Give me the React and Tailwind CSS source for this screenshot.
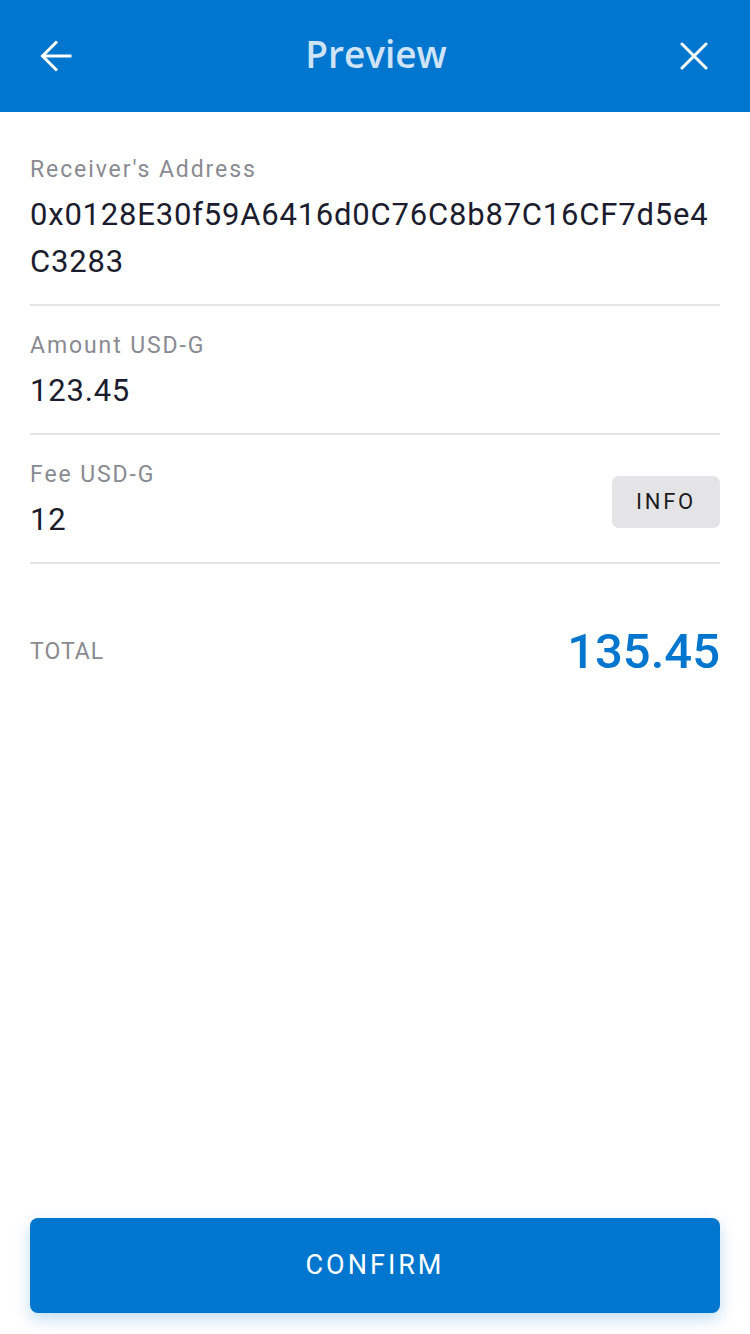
function Field({ label, children, action }) {
  return (
    <div className="flex items-center justify-between border-b-2 border-[#e4e4e6] pt-[25px] pb-[19px]">
      <div className="min-w-0 max-w-[686px]">
        <p className="text-[23px] leading-[30px] tracking-[1.9px] text-[#8a8a91]">{label}</p>
        <div className="mt-[6px] text-[31px] leading-[47px] tracking-[0.8px] text-[#1b1d2e] break-all">{children}</div>
      </div>
      {action}
    </div>
  );
}

export default function App() {
  return (
    <div className="min-h-[1334px] bg-white flex flex-col font-['Roboto',sans-serif]">
      <header className="h-[112px] bg-[#0076ce] flex items-center justify-between pl-[40px] pr-[42px]">
        <svg width="32" height="32" viewBox="0 0 32 32" fill="none" stroke="white" strokeWidth="3" strokeLinejoin="miter">
          <path d="M31.5 16H3" />
          <path d="M17 1.5 2.5 16 17 30.5" />
        </svg>
        <h1 className="font-['Open_Sans',sans-serif] font-semibold text-[37px] leading-[50px] -mt-[4px] text-[#cfe4f6]">Preview</h1>
        <svg width="28" height="28" viewBox="0 0 28 28" fill="none" stroke="white" strokeWidth="3" strokeLinecap="round">
          <path d="M2 2 26 26M26 2 2 26" />
        </svg>
      </header>

      <main className="flex-1 flex flex-col px-[30px]">
        <div className="pt-[18px]">
          <Field label="Receiver's Address">0x0128E30f59A6416d0C76C8b87C16CF7d5e4C3283</Field>
          <Field label="Amount USD-G">123.45</Field>
          <Field
            label="Fee USD-G"
            action={
              <button className="h-[52px] w-[108px] rounded-[7px] bg-[#e4e4e6] text-[22px] tracking-[2.7px] text-[#1c1c1f]">
                INFO
              </button>
            }
          >
            12
          </Field>
        </div>

        <div className="flex items-center justify-between mt-[51px]">
          <span className="text-[23px] tracking-[1px] text-[#8a8a91]">TOTAL</span>
          <span className="text-[49px] font-medium text-[#0076ce]">135.45</span>
        </div>

        <div className="flex-1" />

        <button className="mb-[21px] h-[95px] rounded-[8px] bg-[#0076ce] text-white text-[27px] tracking-[3px] shadow-[0_6px_16px_rgba(0,118,206,0.25)]">
          CONFIRM
        </button>
      </main>
    </div>
  );
}
